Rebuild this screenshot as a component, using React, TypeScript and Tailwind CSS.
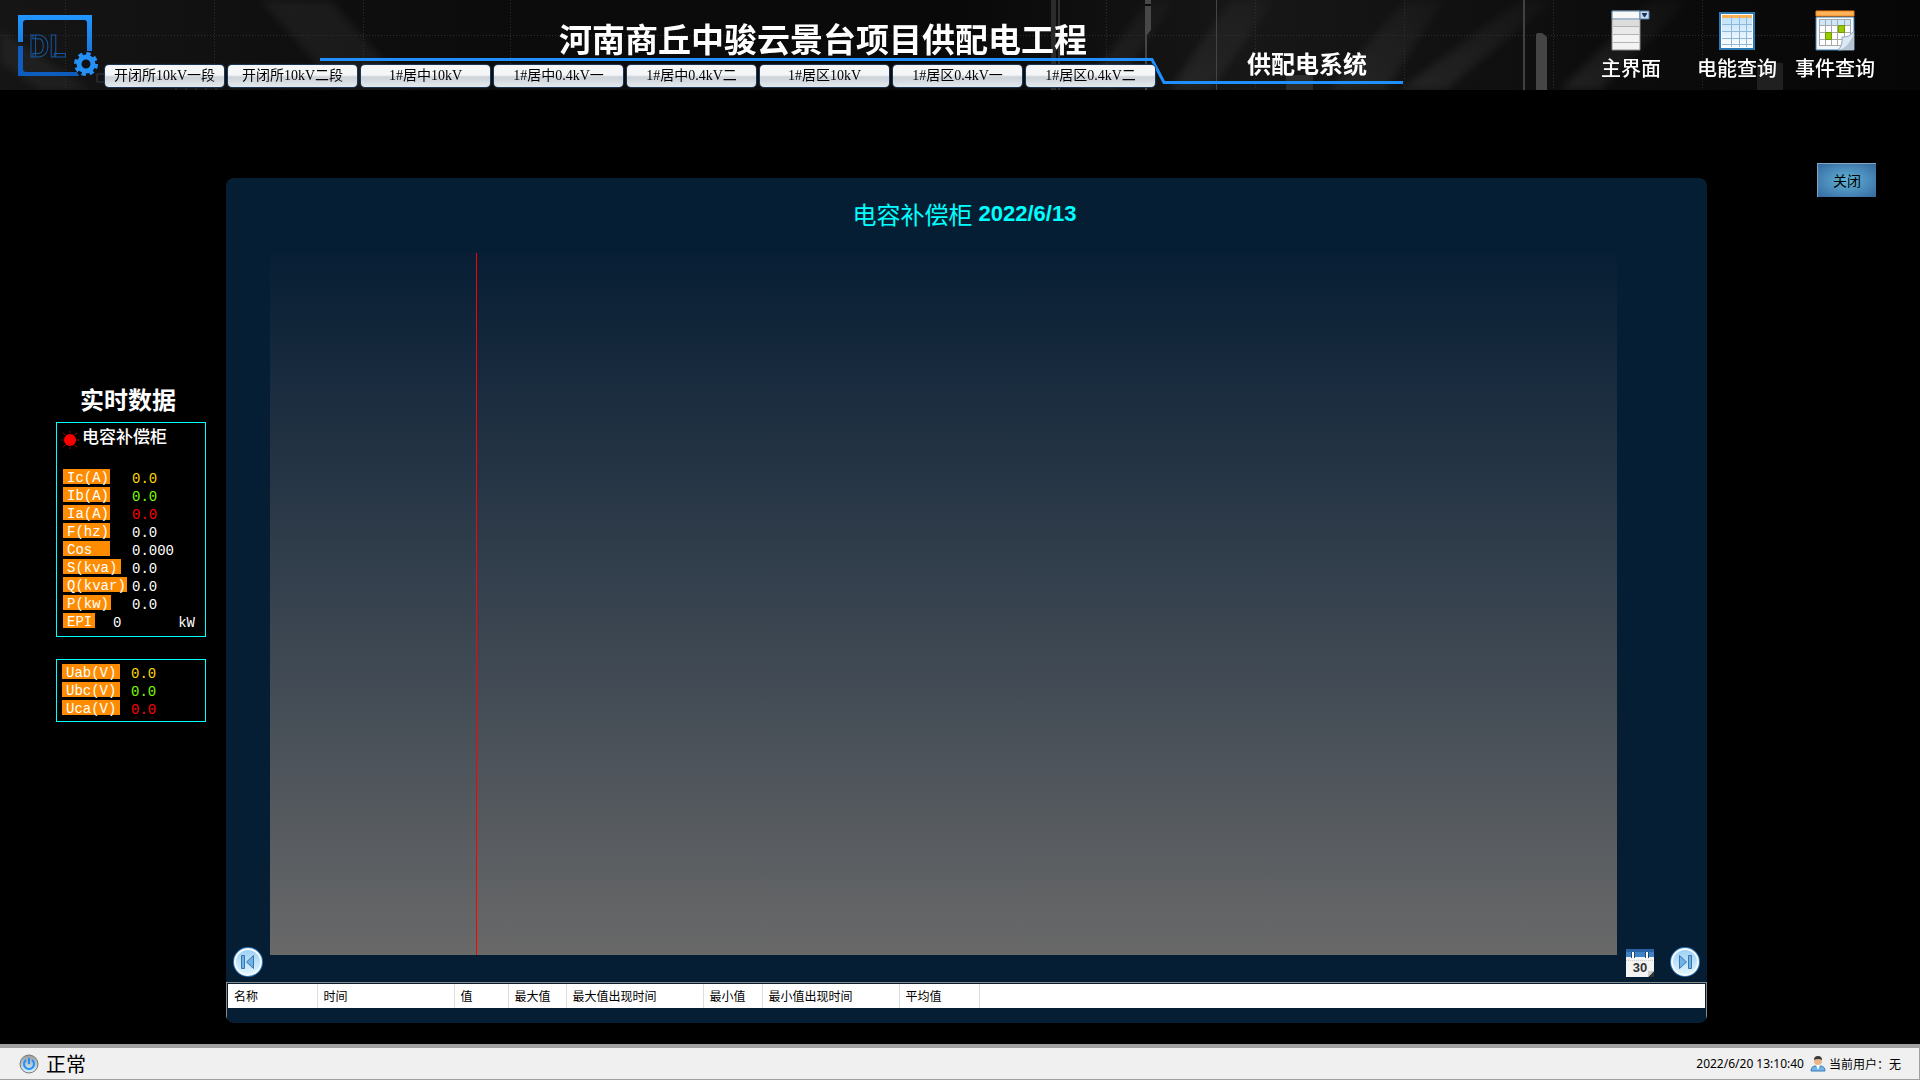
import { useState } from "react"
import type { ReactNode } from "react"
import clsx from "clsx"

const tabs = [
  "开闭所10kV一段",
  "开闭所10kV二段",
  "1#居中10kV",
  "1#居中0.4kV一",
  "1#居中0.4kV二",
  "1#居区10kV",
  "1#居区0.4kV一",
  "1#居区0.4kV二",
]

const readings = [
  { label: "Ic(A)", value: "0.0", badge: "w-[47px]", color: "text-[#ffd700]" },
  { label: "Ib(A)", value: "0.0", badge: "w-[47px]", color: "text-[#7cfc00]" },
  { label: "Ia(A)", value: "0.0", badge: "w-[47px]", color: "text-[#ff0000]" },
  { label: "F(hz)", value: "0.0", badge: "w-[47px]", color: "text-white" },
  { label: "Cos", value: "0.000", badge: "w-[47px]", color: "text-white" },
  { label: "S(kva)", value: "0.0", badge: "w-[58px]", color: "text-white" },
  { label: "Q(kvar)", value: "0.0", badge: "w-[64px]", color: "text-white" },
  { label: "P(kw)", value: "0.0", badge: "w-[48px]", color: "text-white" },
]

const voltages = [
  { label: "Uab(V)", value: "0.0", badge: "w-[58px]", color: "text-[#ffd700]" },
  { label: "Ubc(V)", value: "0.0", badge: "w-[58px]", color: "text-[#7cfc00]" },
  { label: "Uca(V)", value: "0.0", badge: "w-[58px]", color: "text-[#ff0000]" },
]

const columns = [
  { name: "名称", width: "w-[89px]" },
  { name: "时间", width: "w-[137px]" },
  { name: "值", width: "w-[54px]" },
  { name: "最大值", width: "w-[58px]" },
  { name: "最大值出现时间", width: "w-[137px]" },
  { name: "最小值", width: "w-[59px]" },
  { name: "最小值出现时间", width: "w-[137px]" },
  { name: "平均值", width: "w-[80px]" },
]

const sans = "font-['Noto_Sans_CJK_SC',sans-serif]"
const serif = "font-['Liberation_Serif','Noto_Sans_CJK_SC',serif]"
const mono = "font-['Liberation_Mono','Noto_Sans_CJK_SC',monospace]"

function HeaderBackdrop() {
  return (
    <svg
      className="absolute inset-0 h-full w-full"
      viewBox="0 0 1920 90"
      preserveAspectRatio="xMinYMin slice"
      aria-hidden="true"
    >
      <defs>
        <linearGradient id="streak" x1="0" y1="1" x2="1" y2="0">
          <stop offset="0" stopColor="#fff" stopOpacity="0.08" />
          <stop offset="1" stopColor="#fff" stopOpacity="0.02" />
        </linearGradient>
        <linearGradient id="base" x1="0" x2="1" y1="0" y2="0">
          <stop offset="0" stopColor="#151515" />
          <stop offset="0.25" stopColor="#0c0c0c" />
          <stop offset="0.5" stopColor="#090909" />
          <stop offset="0.65" stopColor="#171717" />
          <stop offset="0.85" stopColor="#0c0c0c" />
          <stop offset="1" stopColor="#060606" />
        </linearGradient>
        <filter id="soft" x="-10%" y="-10%" width="120%" height="120%">
          <feGaussianBlur stdDeviation="4" />
        </filter>
      </defs>
      <rect width="1920" height="90" fill="url(#base)" />
      <g filter="url(#soft)">
        <path d="M260 0h70l80 90h-70z" fill="#fff" opacity="0.05" />
        <path d="M0 30l90 60H40L0 62z" fill="#fff" opacity="0.05" />
        <g fill="url(#streak)">
          <path d="M1080 90l70-90h25l-60 90z" />
          <path d="M1170 90l60-90h45l-65 90z" />
          <path d="M1330 90l75-90h40l-60 90z" />
          <path d="M1400 90l120-90h35l-110 90z" />
          <path d="M1560 90l90-90h40l-90 90z" />
        </g>
      </g>
      <g stroke="#2e2e2e" strokeDasharray="1 2">
        <path d="M0 35.500H1920" />
        <path d="M65.500 0v90M214.500 0v90M363.500 0v90M510.500 0v90M1106.500 0v90M1255.500 0v90M1404.500 0v90M1553.500 0v90M1702.500 0v90" />
      </g>
      <rect x="1051" width="5" height="90" fill="#2b2b2b" />
      <rect x="1058" width="2" height="90" fill="#2f2f2f" />
      <rect x="1145" width="2" height="90" fill="#454545" />
      <path d="M1145 0h6v30l-4 5h-2z" fill="#484848" />
      <path d="M1145 5h6" stroke="#0a0a0a" strokeWidth="2" />
      <rect x="1216" width="1" height="90" fill="#444" />
      <rect x="1286" y="75" width="27" height="15" fill="#2c2c2c" />
      <rect x="1523" width="2" height="90" fill="#414141" />
      <path d="M1536 35q0-2 2-2h4l5 4v53h-11z" fill="#454545" />
      <rect x="1757" y="63" width="26" height="27" fill="#202020" />
      <path d="M97 74h9v8h-9zM176 86v4M186 86v4M196 86v4M206 86v4M216 86v4" fill="none" stroke="#3a3a3a" />
    </svg>
  )
}

function Logo() {
  return (
    <svg width="84" height="66" viewBox="0 0 84 66" role="img" aria-label="DL">
      <defs>
        <linearGradient id="frame" x1="0" y1="0" x2="0" y2="1">
          <stop offset="0" stopColor="#2196ff" />
          <stop offset="1" stopColor="#1a78dc" />
        </linearGradient>
      </defs>
      <path
        d="M0 2h74v36h-5V10q0-3-3-3H8Q5 7 5 10v19H0z"
        fill="url(#frame)"
      />
      <path d="M0 33h5v23q0 3 3 3h51l2 4H0z" fill="#0e5cbd" />
      <text
        x="11"
        y="44"
        fontSize="31"
        fontFamily="Roboto, sans-serif"
        fontWeight="700"
        fill="none"
        stroke="#1557a0"
        strokeWidth="1"
      >
        DL
      </text>
      <circle cx="68" cy="51" r="7" fill="#111" stroke="#2491f7" strokeWidth="5" />
      <circle
        cx="68"
        cy="51"
        r="10"
        fill="none"
        stroke="#2491f7"
        strokeWidth="4"
        strokeDasharray="4.200 3.654"
      />
    </svg>
  )
}

function ListIcon() {
  return (
    <svg width="40" height="42" viewBox="0 0 40 42" aria-hidden="true">
      <path d="M1 1h28v39H1z" fill="#f3f3f3" stroke="#8a8a8a" />
      <path d="M2 10h26v6H2z" fill="#dcdcdc" />
      <path d="M2 17h26v7H2z" fill="#e9e9e9" />
      <path d="M2 16.500h26M2 24.500h26M2 32.500h26" stroke="#b3b3b3" />
      <path d="M1 1h28v8H1z" fill="#f8f8f8" stroke="#5b7ea6" />
      <path d="M29 1h9v8h-9z" fill="#c3d9ee" stroke="#5b7ea6" />
      <path d="M31 3h5v1l-2 3h-1l-2-3z" fill="#17365c" />
    </svg>
  )
}

function GridIcon() {
  return (
    <svg width="36" height="38" viewBox="0 0 36 38" aria-hidden="true">
      <defs>
        <linearGradient id="gridFill" x1="0" y1="0" x2="0" y2="1">
          <stop offset="0" stopColor="#b9defa" />
          <stop offset="1" stopColor="#fff" />
        </linearGradient>
      </defs>
      <path d="M1 1h34v36H1z" fill="#fff" stroke="#2a7ab5" strokeWidth="2" />
      <path d="M3 3h30v32H3z" fill="url(#gridFill)" />
      <path d="M3 3h30v3H3z" fill="#ffb04d" />
      <path
        d="M3 12.500h30M3 19.500h30M3 26.500h30M3 32.500h30M12.500 4v31M20.500 4v31M27.500 4v31"
        stroke="#8fb7d9"
      />
    </svg>
  )
}

function EventIcon() {
  return (
    <svg width="40" height="42" viewBox="0 0 40 42" aria-hidden="true">
      <path d="M1 7h38v14L27 40H1z" fill="#f2f8fd" stroke="#3a80b5" />
      <path d="M4 9h32v27H4z" fill="#fff" />
      <path d="M4 9h32v6H4z" fill="#cde8fb" />
      <path
        d="M4.500 9v27M10.500 9v27M16.500 9v27M22.500 9v27M29.500 9v27M35.500 9v18M4 9.500h32M4 15.500h32M4 22.500h32M4 29.500h28M4 35.500h23"
        stroke="#a9a9a9"
      />
      <path d="M10.500 22.500h6v7h-6zM23.500 15.500h6v7h-6z" fill="#9c0" stroke="#6f9a00" />
      <path d="M39 21v19H23q5-5 4-13 7 1 12-6z" fill="#dce8f2" stroke="#8fa9bf" />
      <path d="M38 26v13H27q7-4 11-13z" fill="#b4c4d2" />
      <path d="M1 1h38v5H1z" fill="#ffb45c" stroke="#f58410" />
    </svg>
  )
}

function SkipIcon({ forward = false }: { forward?: boolean }) {
  return (
    <svg
      width="30"
      height="30"
      viewBox="0 0 30 30"
      className={clsx(forward && "-scale-x-100")}
      aria-hidden="true"
    >
      <defs>
        <linearGradient id="disc" x1="0" y1="0" x2="0" y2="1">
          <stop offset="0" stopColor="#9cd0f5" />
          <stop offset="1" stopColor="#e2f6ff" />
        </linearGradient>
      </defs>
      <circle cx="15" cy="15" r="15" fill="#2d76b5" />
      <circle cx="15" cy="15" r="13" fill="url(#disc)" stroke="#f4fbff" strokeWidth="2" />
      <path d="M8.500 8.500h3v13h-3zM20.500 8.500v13L13.500 15z" fill="#6fb2e6" stroke="#3b76ad" />
    </svg>
  )
}

function CalendarIcon() {
  return (
    <svg width="28" height="28" viewBox="0 0 28 28" aria-hidden="true">
      <path d="M0 0h28v28H0z" fill="#f3f3f3" />
      <path d="M0 0h28v8H0z" fill="#3f83c7" />
      <path d="M0 0h28v3H0z" fill="#2c62a5" />
      <path d="M0 11.500h28" stroke="#c9c9c9" strokeDasharray="1 1" />
      <path d="M7 3v6M21 3v6" stroke="#25476e" strokeWidth="4" />
      <path d="M7 3v6M21 3v6" stroke="#fff" strokeWidth="2" />
      <path d="M22 28l6-6v6z" fill="#333" />
      <path d="M22 22h6l-6 6z" fill="#ccc" />
      <text
        x="14"
        y="23"
        fontSize="13"
        fontWeight="700"
        textAnchor="middle"
        fontFamily="'Liberation Sans', sans-serif"
        fill="#333"
      >
        30
      </text>
    </svg>
  )
}

function LampIcon() {
  return (
    <svg width="18" height="18" viewBox="0 0 18 18" aria-hidden="true">
      <circle cx="9" cy="9" r="6" fill="#f00" />
      <path
        d="M9 0v2M9 16v2M0 9h2M16 9h2M2 2l2 2M14 14l2 2M2 16l2-2M14 4l2-2"
        stroke="#a00000"
      />
    </svg>
  )
}

function PowerIcon() {
  return (
    <svg width="20" height="20" viewBox="0 0 20 20" aria-hidden="true">
      <defs>
        <linearGradient id="power" x1="0" y1="0" x2="0" y2="1">
          <stop offset="0" stopColor="#9b9b9b" />
          <stop offset="1" stopColor="#d9f3ff" />
        </linearGradient>
      </defs>
      <circle cx="10" cy="10" r="9" fill="url(#power)" stroke="#777" />
      <path
        d="M7 6a5 5 0 1 0 6 0M10 4v6"
        fill="none"
        stroke="#1e90ff"
        strokeWidth="2"
      />
    </svg>
  )
}

function UserIcon() {
  return (
    <svg width="16" height="16" viewBox="0 0 16 16" aria-hidden="true">
      <path d="M1 15q0-5 5-5h4q5 0 5 5z" fill="#6fb3e8" stroke="#3d7fb8" />
      <path d="M6 9h4l-2 5z" fill="#fff" />
      <circle cx="8" cy="5" r="4" fill="#e8b48a" />
      <path d="M4 4q0-4 4-4t4 4q-4-2-8 0z" fill="#3a3a3a" />
    </svg>
  )
}

function ToolButton({ label, className, children }: { label: string; className?: string; children: ReactNode }) {
  return (
    <button className={clsx("flex w-20 flex-col items-center", className)}>
      <span className="flex h-[42px] items-center">{children}</span>
      <span className="mt-1 text-xl leading-6 font-medium text-white">{label}</span>
    </button>
  )
}

function Reading({ label, value, badge, color }: (typeof readings)[number]) {
  return (
    <div className="flex h-[18px] items-start">
      <dt className="w-[69px]">
        <span className={clsx("block h-[15px] bg-[#ff8c00] pl-1 text-sm leading-[18px] text-white", badge)}>
          {label}
        </span>
      </dt>
      <dd className={clsx("text-sm leading-5", color)}>{value}</dd>
    </div>
  )
}

export default function App() {
  const [activeTab, setActiveTab] = useState(0)

  return (
    <div className={clsx("flex min-h-screen flex-col bg-black", sans)}>
      {/* Header */}
      <header className="relative flex h-[90px] shrink-0 items-end">
        <HeaderBackdrop />
        <svg
          className="absolute top-[56px] left-[320px]"
          width="1083"
          height="30"
          viewBox="0 0 1083 30"
          aria-hidden="true"
        >
          <path d="M0 3.500h832l12 23h239" fill="none" stroke="#1e90ff" strokeWidth="3" />
        </svg>

        <div className="relative mb-[11px] w-[105px] shrink-0 pl-[18px]">
          <Logo />
        </div>

        <div className="relative flex shrink-0 flex-col">
          <h1 className="mb-1 pl-[454px] text-[33px] leading-[46px] font-bold whitespace-nowrap text-white">
            河南商丘中骏云景台项目供配电工程
          </h1>
          <nav className={clsx("flex gap-1 pb-[3px]", serif)}>
            {tabs.map((tab, i) => (
              <button
                key={tab}
                onClick={() => setActiveTab(i)}
                aria-pressed={i === activeTab}
                className={clsx(
                  "h-[22px] rounded-[4px] bg-linear-to-b from-[#f4f6f8] from-45% via-[#cdd2d8] via-55% to-[#e4e9ee] text-sm leading-[22px] text-black shadow-[0_0_1px_1px_#1c3a5c]",
                  i === 0 ? "w-[119px]" : "w-[129px]"
                )}
              >
                {tab}
              </button>
            ))}
          </nav>
        </div>

        <p className="relative mb-[11px] ml-[92px] text-2xl leading-8 font-bold whitespace-nowrap text-white">
          供配电系统
        </p>

        <div className="relative mr-[45px] mb-[10px] ml-auto flex gap-[18px]">
          <ToolButton label="主界面" className="mr-2">
            <ListIcon />
          </ToolButton>
          <ToolButton label="电能查询">
            <GridIcon />
          </ToolButton>
          <ToolButton label="事件查询">
            <EventIcon />
          </ToolButton>
        </div>
      </header>

      {/* Body */}
      <main className="flex flex-1">
        <aside className="w-[226px] shrink-0 pt-[293px] pr-5 pl-14">
          <h2 className="mb-[7px] pl-6 text-2xl leading-8 font-bold text-white">实时数据</h2>

          <section className="border border-[#00ffff] pb-[5px] pl-[6px]">
            <h3 className="mb-5 flex h-[26px] items-center text-[17px] leading-[26px] font-medium text-white">
              <span className="-ml-[2px] pt-2">
                <LampIcon />
              </span>
              <span className="ml-[3px]">电容补偿柜</span>
            </h3>
            <dl className={mono}>
              {readings.map((r) => (
                <Reading key={r.label} {...r} />
              ))}
              <div className="flex h-[18px] items-start pr-[10px] text-sm leading-5 text-white">
                <dt className="h-[15px] w-8 bg-[#ff8c00] pl-1 leading-[18px]">EPI</dt>
                <dd className="flex flex-1 justify-between pl-[18px]">
                  <span>0</span>
                  <span>kW</span>
                </dd>
              </div>
            </dl>
          </section>

          <section className="mt-[22px] border border-[#00ffff] pt-1 pb-[3px] pl-[5px]">
            <dl className={mono}>
              {voltages.map((v) => (
                <Reading key={v.label} {...v} />
              ))}
            </dl>
          </section>
        </aside>

        {/* Trend panel */}
        <section className="mt-[88px] mb-[21px] flex flex-1 flex-col overflow-hidden rounded-lg bg-[#051e34]">
          <h2 className="mb-[3px] flex h-[72px] items-center justify-center gap-[6px] pr-1 text-2xl text-[#00ffff]">
            <span>电容补偿柜</span>
            <span className="font-['Liberation_Sans',sans-serif] text-[22px] font-bold">2022/6/13</span>
          </h2>

          <div className="flex flex-1 items-end">
            <div className="w-11 shrink-0 pl-[7px]">
              <button className="block" aria-label="上一页">
                <SkipIcon />
              </button>
            </div>
            <div className="relative mb-[22px] flex-1 self-stretch bg-linear-to-b from-[#071e34] to-[#696969]">
              <div className="absolute inset-y-0 left-[206px] w-px bg-[#ff0000]" />
            </div>
            <div className="flex w-[90px] shrink-0 items-end justify-end gap-4 pr-[7px]">
              <button className="block" aria-label="选择日期">
                <CalendarIcon />
              </button>
              <button className="block" aria-label="下一页">
                <SkipIcon forward />
              </button>
            </div>
          </div>

          <div className="mt-[5px] h-[41px] border-x border-t border-[#8a8a8a] px-px pt-px">
            <table className="w-full table-fixed border-collapse bg-white">
              <thead>
                <tr className="h-6">
                  {columns.map((c) => (
                    <th
                      key={c.name}
                      className={clsx(
                        "border-r border-[#dedede] py-0 pl-[6px] text-left text-xs leading-6 font-normal whitespace-nowrap text-black",
                        c.width
                      )}
                    >
                      {c.name}
                    </th>
                  ))}
                  <td />
                </tr>
              </thead>
            </table>
          </div>
        </section>

        <div className="w-[213px] shrink-0 pt-[73px] pl-[110px]">
          <button className="h-[34px] w-[59px] border-t border-l border-[#7fa6c4] bg-[radial-gradient(ellipse_at_center,#62b3d6,#3568a0)] pb-[2px] text-sm text-black">
            关闭
          </button>
        </div>
      </main>

      {/* Status bar */}
      <footer className="flex h-9 shrink-0 items-center border-t-4 border-r border-b border-t-[#a0a0a0] border-r-[#a0a0a0] border-b-[#a0a0a0] bg-[#f0f0f0] pr-[18px] pl-[19px] text-black">
        <PowerIcon />
        <span className="ml-[7px] text-xl leading-7">正常</span>
        <div className="ml-auto flex items-center text-xs">
          <time className="mr-[6px] font-['Noto_Sans',sans-serif]">2022/6/20 13:10:40</time>
          <UserIcon />
          <span className="ml-[3px]">当前用户：无</span>
        </div>
      </footer>
    </div>
  )
}
